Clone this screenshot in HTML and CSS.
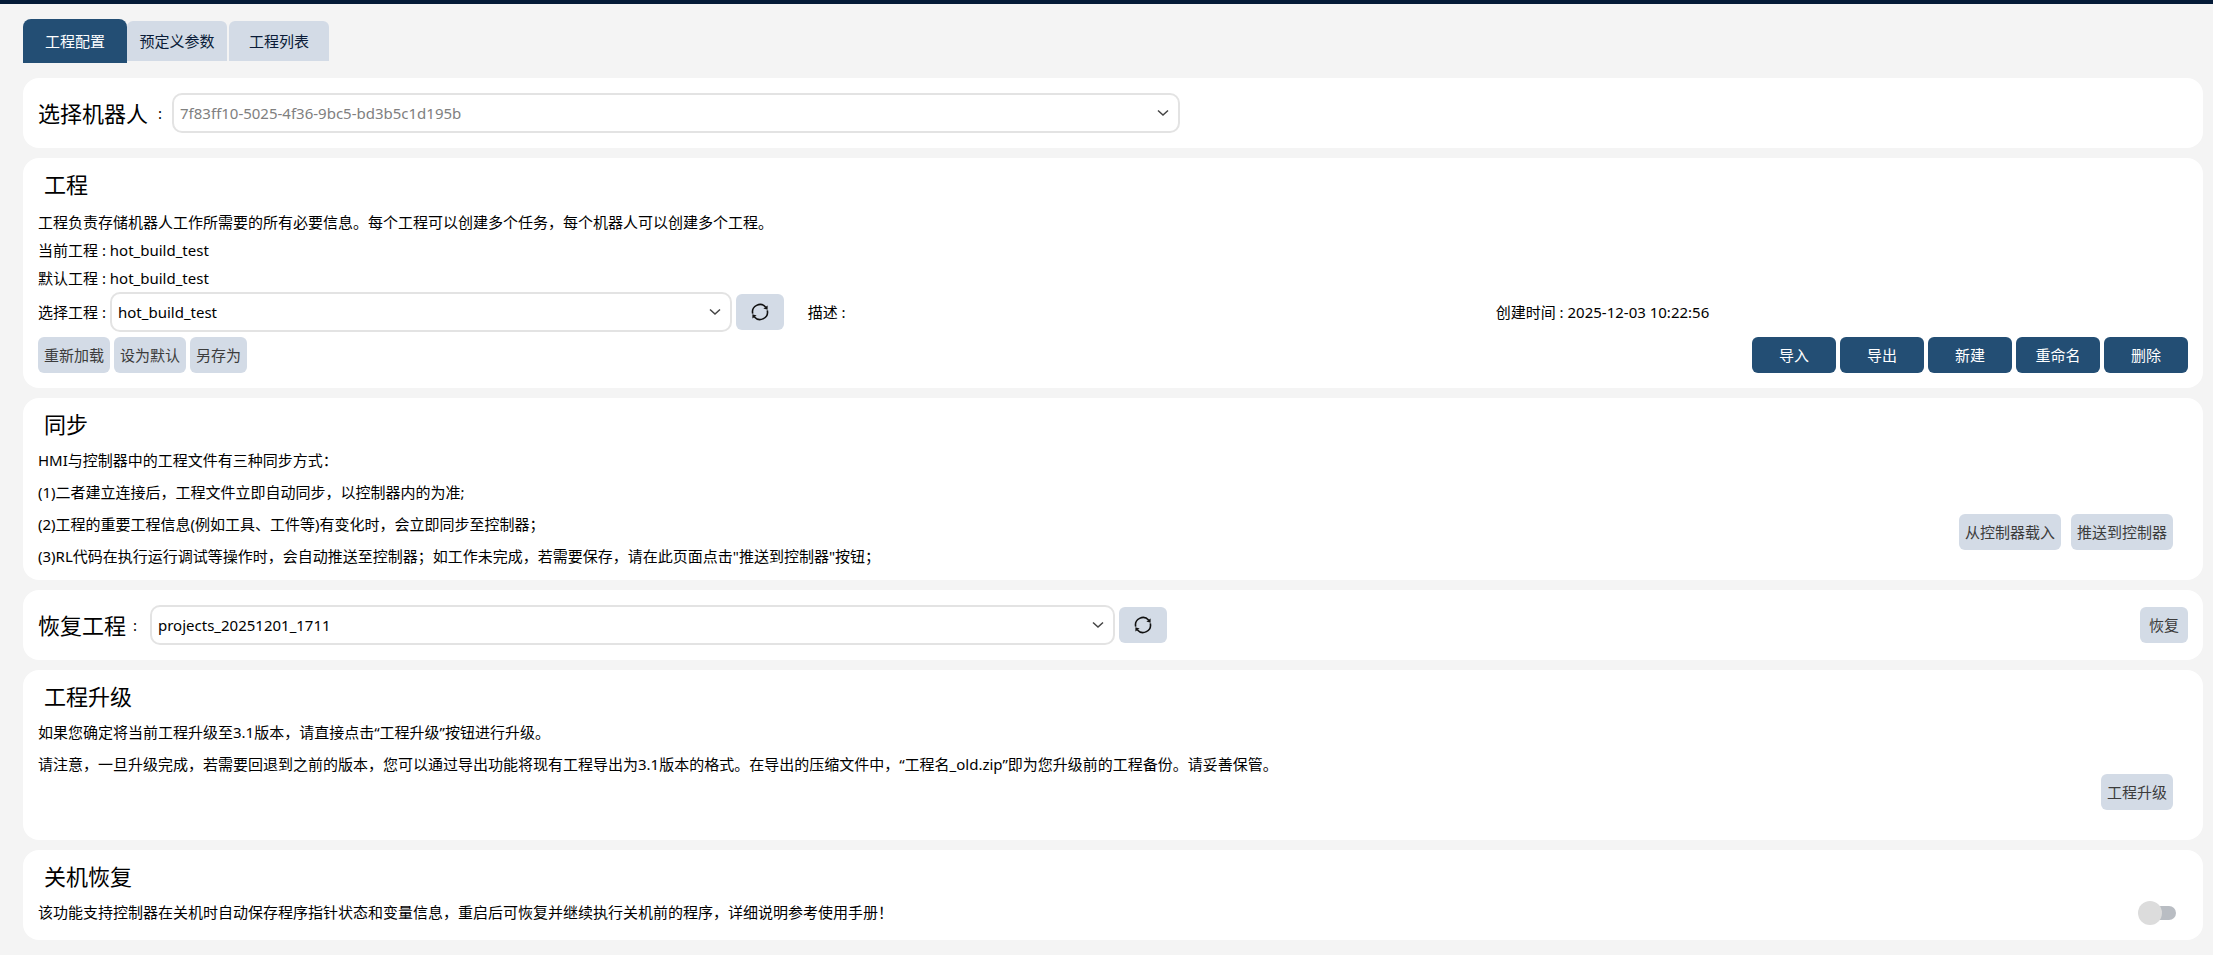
FILE: index.html
```html
<!DOCTYPE html>
<html lang="zh-CN">
<head>
<meta charset="utf-8">
<title>工程配置</title>
<link rel="stylesheet" href="styles.css">
</head>
<body>
<svg class="defs" aria-hidden="true">
  <symbol id="chevron" viewBox="0 0 12 8"><path d="M1 1.5 6 6 11 1.5" fill="none" stroke="#444" stroke-width="1.5"/></symbol>
  <symbol id="refresh" viewBox="0 0 18 18">
    <path d="M1.7 10.6A7.5 7.5 0 0 1 14.6 4M16.3 7.4A7.5 7.5 0 0 1 3.4 14" fill="none" stroke="#111" stroke-width="1.6"/>
    <path d="M16.6 2.6v4.2l-4.2-1.2zM1.4 15.4v-4.2l4.2 1.2z" fill="#111"/>
  </symbol>
</svg>
<nav class="tabs">
  <button class="tab tab-active" type="button">工程配置</button>
  <button class="tab" type="button">预定义参数</button>
  <button class="tab" type="button">工程列表</button>
</nav>
<main class="page">
  <section class="card card-row">
    <label class="row-label robot-label" for="robot"><span class="title">选择机器人</span><span>:</span></label>
    <div class="select-box">
      <select id="robot" class="select" disabled><option>7f83ff10-5025-4f36-9bc5-bd3b5c1d195b</option></select>
      <svg class="chevron"><use href="#chevron"/></svg>
    </div>
    <div class="spacer"></div>
  </section>

  <section class="card project">
    <h2 class="title heading">工程</h2>
    <p class="line">工程负责存储机器人工作所需要的所有必要信息。每个工程可以创建多个任务，每个机器人可以创建多个工程。</p>
    <p class="line">当前工程 : hot_build_test</p>
    <p class="line">默认工程 : hot_build_test</p>
    <div class="project-grid">
      <div class="picker">
        <label class="picker-label" for="project">选择工程 :</label>
        <div class="select-box">
          <select id="project" class="select"><option>hot_build_test</option></select>
          <svg class="chevron"><use href="#chevron"/></svg>
        </div>
        <button class="btn btn-icon" type="button" aria-label="刷新工程"><svg class="refresh"><use href="#refresh"/></svg></button>
      </div>
      <span>描述 :</span>
      <span>创建时间 : 2025-12-03 10:22:56</span>
    </div>
    <div class="toolbar">
      <div class="group">
        <button class="btn" type="button">重新加载</button>
        <button class="btn" type="button">设为默认</button>
        <button class="btn" type="button">另存为</button>
      </div>
      <div class="group">
        <button class="btn btn-primary" type="button">导入</button>
        <button class="btn btn-primary" type="button">导出</button>
        <button class="btn btn-primary" type="button">新建</button>
        <button class="btn btn-primary" type="button">重命名</button>
        <button class="btn btn-primary" type="button">删除</button>
      </div>
    </div>
  </section>

  <section class="card sync">
    <h2 class="title heading">同步</h2>
    <div class="split">
      <div class="text">
        <p>HMI与控制器中的工程文件有三种同步方式：</p>
        <p>(1)二者建立连接后，工程文件立即自动同步，以控制器内的为准;</p>
        <p>(2)工程的重要工程信息(例如工具、工件等)有变化时，会立即同步至控制器；</p>
        <p>(3)RL代码在执行运行调试等操作时，会自动推送至控制器；如工作未完成，若需要保存，请在此页面点击"推送到控制器"按钮；</p>
      </div>
      <div class="actions">
        <button class="btn" type="button">从控制器载入</button>
        <button class="btn" type="button">推送到控制器</button>
      </div>
    </div>
  </section>

  <section class="card card-row">
    <label class="row-label backup-label" for="backup"><span class="title">恢复工程</span><span>:</span></label>
    <div class="select-box">
      <select id="backup" class="select"><option>projects_20251201_1711</option></select>
      <svg class="chevron"><use href="#chevron"/></svg>
    </div>
    <button class="btn btn-icon" type="button" aria-label="刷新备份"><svg class="refresh"><use href="#refresh"/></svg></button>
    <div class="spacer"></div>
    <button class="btn btn-small" type="button">恢复</button>
  </section>

  <section class="card upgrade">
    <h2 class="title heading">工程升级</h2>
    <div class="split">
      <div class="text">
        <p>如果您确定将当前工程升级至3.1版本，请直接点击“工程升级”按钮进行升级。</p>
        <p>请注意，一旦升级完成，若需要回退到之前的版本，您可以通过导出功能将现有工程导出为3.1版本的格式。在导出的压缩文件中，“工程名_old.zip”即为您升级前的工程备份。请妥善保管。</p>
      </div>
      <div class="actions">
        <button class="btn" type="button">工程升级</button>
      </div>
    </div>
  </section>

  <section class="card shutdown">
    <h2 class="title heading">关机恢复</h2>
    <div class="split">
      <label class="text" for="resume">该功能支持控制器在关机时自动保存程序指针状态和变量信息，重启后可恢复并继续执行关机前的程序，详细说明参考使用手册！</label>
      <input id="resume" class="switch" type="checkbox" role="switch">
    </div>
  </section>
</main>
</body>
</html>
```
FILE: styles.css
```css
* {
  box-sizing: border-box;
}

body {
  margin: 0;
  min-height: 100vh;
  border-top: 4px solid #041a37;
  background: #f4f4f4;
  color: #000;
  font-family: "Noto Sans", "Noto Sans CJK SC", sans-serif;
  font-size: 15px;
  line-height: 28px;
}

button,
select {
  font: inherit;
}

p,
h2 {
  margin: 0;
}

.defs {
  display: none;
}

.tabs {
  display: flex;
  align-items: center;
  padding: 15px 10px 15px 23px;
}

.tab {
  width: 100px;
  height: 40px;
  margin-right: 2px;
  padding: 0;
  border: 0;
  border-radius: 6px 6px 0 0;
  background: #d3dbe6;
  color: #0a1c38;
}

.tab-active {
  width: 104px;
  height: 44px;
  margin-right: 0;
  border-radius: 8px 8px 0 0;
  background: #234e74;
  color: #fff;
}

.page {
  display: flex;
  flex-direction: column;
  gap: 10px;
  padding: 0 10px 15px 23px;
}

.card {
  padding: 10px 15px 8px;
  border-radius: 16px;
  background: #fff;
}

.card-row {
  display: flex;
  align-items: center;
  gap: 4px;
  padding: 15px;
}

.title {
  font-size: 22px;
  font-weight: 400;
  line-height: 32px;
}

.heading {
  padding-left: 6px;
}

.row-label {
  display: flex;
  align-items: center;
}

.robot-label {
  gap: 10px;
  width: 130px;
}

.backup-label {
  gap: 7px;
  width: 108px;
}

.select-box {
  position: relative;
  flex: 1;
}

.spacer {
  flex: 1;
}

.robot-label ~ .spacer {
  margin-left: -4px;
}

.select {
  display: block;
  width: 100%;
  height: 40px;
  padding: 0 32px 0 6px;
  border: 2px solid #e3e3e3;
  border-radius: 10px;
  appearance: none;
  background: #fff;
  color: #000;
}

.select:disabled {
  color: #808080;
  opacity: 1;
}

.chevron {
  position: absolute;
  top: 16px;
  right: 11px;
  width: 12px;
  height: 8px;
  pointer-events: none;
}

.btn {
  height: 36px;
  padding: 0 6px;
  border: 0;
  border-radius: 6px;
  background: #d3dbe6;
  color: #3c3c3c;
}

.btn-primary {
  width: 84px;
  background: #234e74;
  color: #fff;
}

.btn-small {
  width: 48px;
}

.btn-icon {
  display: flex;
  align-items: center;
  justify-content: center;
  width: 48px;
}

.refresh {
  width: 18px;
  height: 18px;
}

.project {
  padding-bottom: 15px;
}

.project .heading {
  margin-bottom: 8px;
}

.project-grid {
  display: grid;
  grid-template-columns: 35.8% 32% 1fr;
  align-items: center;
}

.picker {
  display: flex;
  align-items: center;
  gap: 4px;
  padding-right: 24px;
}

.picker-label {
  width: 68px;
  white-space: nowrap;
}

.toolbar,
.group {
  display: flex;
  gap: 4px;
}

.toolbar {
  justify-content: space-between;
  margin-top: 5px;
}

.split {
  display: flex;
  justify-content: space-between;
  margin-top: 4px;
}

.text {
  line-height: 32px;
}

.actions {
  display: flex;
  flex-shrink: 0;
  align-items: flex-end;
  gap: 10px;
  padding: 58px 15px 22px 0;
}

.shutdown {
  padding-bottom: 12px;
}

.switch {
  position: relative;
  width: 38px;
  height: 24px;
  margin: 5px 12px 0 0;
  appearance: none;
}

.switch::before {
  content: "";
  position: absolute;
  inset: 5px 0 5px 10px;
  border-radius: 7px;
  background: #b9bdc3;
}

.switch::after {
  content: "";
  position: absolute;
  top: 0;
  left: 0;
  width: 24px;
  height: 24px;
  border-radius: 50%;
  background: #dcdcdc;
}

.switch:checked::after {
  left: 14px;
}
```
